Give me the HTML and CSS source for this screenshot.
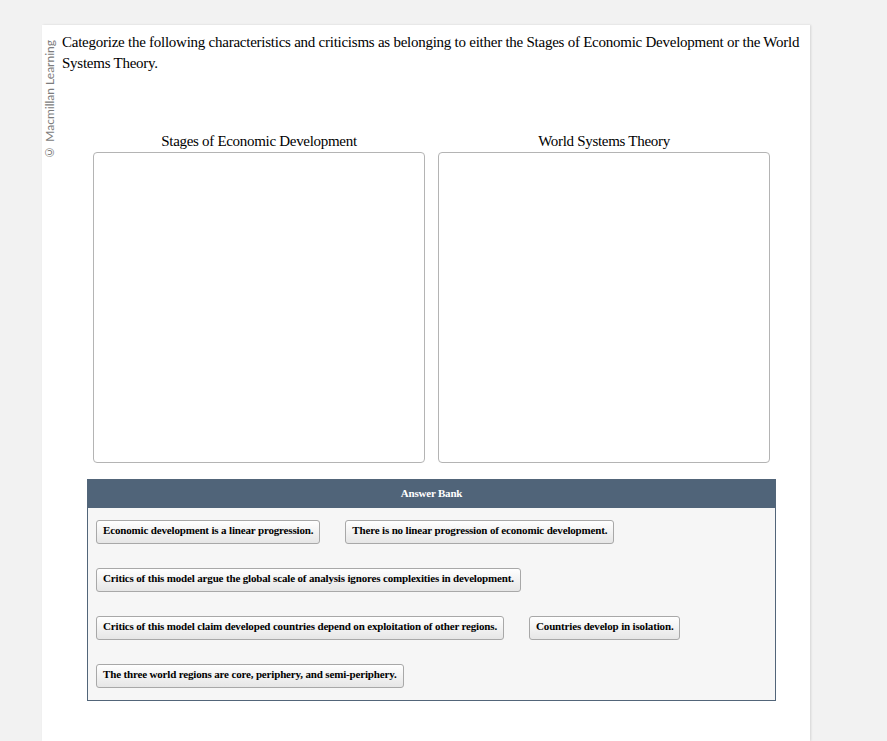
FILE: index.html
```html
<!DOCTYPE html>
<html lang="en">
<head>
<meta charset="utf-8">
<title>Categorize</title>
<link rel="stylesheet" href="styles.css">
</head>
<body>
<div class="page">
  <div class="card">
    <div class="credit">© Macmillan Learning</div>
    <div class="content">
      <p class="question">Categorize the following characteristics and criticisms as belonging to either the Stages of Economic Development or the World Systems Theory.</p>
      <div class="categories">
        <div class="category">
          <div class="category-title">Stages of Economic Development</div>
          <div class="dropzone"></div>
        </div>
        <div class="category">
          <div class="category-title">World Systems Theory</div>
          <div class="dropzone"></div>
        </div>
      </div>
      <div class="bank">
        <div class="bank-header">Answer Bank</div>
        <div class="bank-body">
          <div class="bank-row">
            <span class="item">Economic development is a linear progression.</span>
            <span class="item">There is no linear progression of economic development.</span>
          </div>
          <div class="bank-row">
            <span class="item">Critics of this model argue the global scale of analysis ignores complexities in development.</span>
          </div>
          <div class="bank-row">
            <span class="item">Critics of this model claim developed countries depend on exploitation of other regions.</span>
            <span class="item">Countries develop in isolation.</span>
          </div>
          <div class="bank-row">
            <span class="item">The three world regions are core, periphery, and semi-periphery.</span>
          </div>
        </div>
      </div>
    </div>
  </div>
</div>
</body>
</html>
```

FILE: styles.css
```css
html, body {
  margin: 0;
  padding: 0;
  background: #f2f2f2;
  height: 100%;
}

.page {
  padding: 25px 0 0 42px;
  height: 716px;
  overflow: hidden;
}

.card {
  width: 768px;
  height: 100%;
  background: #ffffff;
  box-shadow: 1px 0 2px rgba(0, 0, 0, 0.12);
  display: flex;
  align-items: flex-start;
}

.credit {
  width: 20px;
  flex: none;
  writing-mode: vertical-rl;
  transform: rotate(180deg);
  font-family: Lato, "Open Sans", sans-serif;
  font-size: 12px;
  line-height: 16px;
  color: #7c7c7c;
  margin-top: 15px;
}

.content {
  flex: 1;
  padding: 7px 5px 0 0;
  font-family: "Liberation Serif", "Times New Roman", serif;
  color: #000;
}

.question {
  margin: 0 0 57px 0;
  font-size: 15px;
  line-height: 21px;
  letter-spacing: -0.25px;
}

.categories {
  display: flex;
  gap: 13px;
  margin-left: 31px;
}

.category {
  width: 332px;
}

.category-title {
  text-align: center;
  font-size: 15px;
  line-height: 21px;
  letter-spacing: -0.3px;
}

.dropzone {
  box-sizing: border-box;
  height: 311px;
  border: 1px solid #b4b4b4;
  border-radius: 4px;
  background: #fff;
}

.bank {
  margin: 16px 0 0 25px;
  width: 689px;
  box-sizing: border-box;
  border: 1px solid #526579;
}

.bank-header {
  background: #506479;
  color: #fff;
  text-align: center;
  font-weight: bold;
  font-size: 11px;
  letter-spacing: -0.2px;
  height: 28px;
  line-height: 26px;
}

.bank-body {
  background: #f6f6f6;
  padding: 12px 8px 12px 8px;
  display: flex;
  flex-direction: column;
  gap: 24px;
}

.bank-row {
  display: flex;
  gap: 25px;
}

.item {
  box-sizing: border-box;
  height: 24px;
  line-height: 18px;
  padding: 0 6px;
  border: 1px solid #a8a8a8;
  border-radius: 3px;
  background: linear-gradient(#ffffff, #e6e6e6);
  font-size: 11px;
  font-weight: bold;
  letter-spacing: -0.16px;
  white-space: nowrap;
}
```
